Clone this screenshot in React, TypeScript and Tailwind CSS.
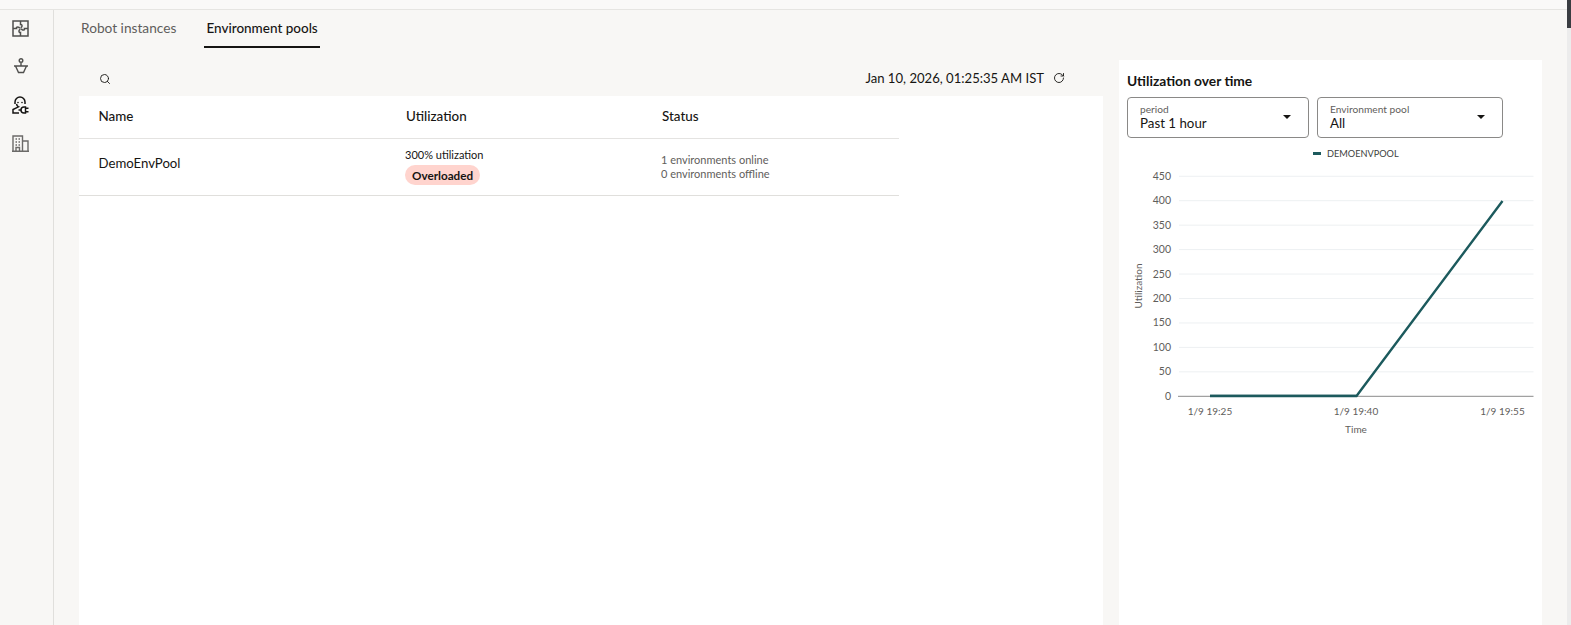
import { Search, RotateCw } from "lucide-react";

function PuzzleIcon() {
  return (
    <svg width="17" height="17" viewBox="0 0 17 17" fill="none" stroke="#4f4f4d" strokeWidth="1.5">
      <rect x="1" y="1" width="15" height="15" />
      <path d="M1 8.5h3.5c-.8-2 3.2-2 3 0M8.5 1v3.5c2-.8 2 3.2 0 3M16 8.5h-3.5c.8 2-3.2 2-3 0M8.5 16v-3.5c-2 .8-2-3.2 0-3" />
    </svg>
  );
}

function PersonBowlIcon() {
  return (
    <svg width="16" height="17" viewBox="0 0 16 17" fill="none" stroke="#4f4f4d" strokeWidth="1.4">
      <circle cx="8" cy="2.5" r="1.8" />
      <path d="M8 5v2.5M1 8h14M2.5 8 5.5 14.5h5L13.5 8" />
    </svg>
  );
}

function AgentPlugIcon() {
  return (
    <svg width="17" height="18" viewBox="0 0 17 18" fill="none" stroke="#161513" strokeWidth="1.5">
      <path d="M3 8V6a5 5 0 0 1 10 0v2" />
      <path d="M4.5 8c.3 1.5 1 2.3 2 2.8L1 13.5V17h6" />
      <circle cx="6" cy="6.5" r=".8" fill="#161513" stroke="none" />
      <circle cx="10" cy="6.5" r=".8" fill="#161513" stroke="none" />
      <path d="M9 14a3 3 0 0 1 3-3h1.5v6H12a3 3 0 0 1-3-3Z" fill="#fff" />
      <path d="M13.5 12.2h3M13.5 15.7h3M6.5 14H9" />
    </svg>
  );
}

function BuildingIcon() {
  return (
    <svg width="17" height="17" viewBox="0 0 17 17" fill="none" stroke="#6b6a68" strokeWidth="1.4">
      <path d="M1 16.3V1h9.5v15.3M10.5 6H16v10.3M0 16.3h17" />
      <path d="M3.5 4h1.5M6.5 4H8M3.5 7h1.5M6.5 7H8M3.5 10h1.5M6.5 10H8M4 16v-3.5h3.5V16" />
    </svg>
  );
}

function Sidebar() {
  return (
    <aside className="flex w-[54px] shrink-0 flex-col items-center gap-[21px] border-r border-[#e0dfdc] pr-[12px] pt-[10px]">
      <PuzzleIcon />
      <PersonBowlIcon />
      <AgentPlugIcon />
      <BuildingIcon />
    </aside>
  );
}

function Tabs() {
  return (
    <div className="flex h-[38px] pl-[27px] text-[13.7px]">
      <div className="mr-[28px] pt-[8px] text-[#5f5e5c]">Robot instances</div>
      <div className="h-[38px] border-b-2 border-[#161513] px-[2px] pt-[8px] text-[13.5px] font-medium text-[#161513]">Environment pools</div>
    </div>
  );
}

function PoolTable() {
  return (
    <div className="min-h-0 flex-1 bg-white">
      <div className="w-[820px] text-[#161513]">
        <div className="flex h-[43px] items-center border-b border-[#e4e3e1] pb-[2px] text-[13.4px] font-medium">
          <div className="w-[327px] pl-[19.5px]">Name</div>
          <div className="w-[256px]">Utilization</div>
          <div>Status</div>
        </div>
        <div className="flex h-[57px] items-center border-b border-[#e0dfdc]">
          <div className="w-[326px] pb-[6px] pl-[19.5px] text-[13.2px]">DemoEnvPool</div>
          <div className="w-[256px]">
            <div className="text-[11px] leading-[14px]">300% utilization</div>
            <div className="mt-[3px] inline-block rounded-full bg-[#ffd4ce] px-[7px] text-[11.7px] font-bold leading-[20px]">Overloaded</div>
          </div>
          <div className="text-[11px] leading-[14px] text-[#5f5e5c]">
            <div>1 environments online</div>
            <div>0 environments offline</div>
          </div>
        </div>
      </div>
    </div>
  );
}

function SelectBox({ label, value, width }: { label: string; value: string; width: string }) {
  return (
    <div className={`relative h-[41px] rounded-[4px] border border-[#8a8987] bg-white pl-[12px] pt-[5px] ${width}`}>
      <div className="text-[10.2px] leading-[13px] text-[#5f5e5c]">{label}</div>
      <div className="text-[13.3px] leading-[15px] text-[#161513]">{value}</div>
      <div className="absolute right-[17px] top-[17px] h-0 w-0 border-x-[4px] border-t-[4px] border-x-transparent border-t-[#161513]" />
    </div>
  );
}

function UtilizationChart() {
  const ticks = [450, 400, 350, 300, 250, 200, 150, 100, 50];
  const rowH = 24.45;
  const y0 = 258.3;
  return (
    <svg width="423" height="300" viewBox="0 0 423 300">
      {ticks.map((t) => {
        const y = y0 - (t / 50) * rowH;
        return (
          <g key={t}>
            <line x1="60" x2="414.5" y1={y} y2={y} stroke="#edf0f2" />
            <text x="52" y={y + 3.5} textAnchor="end" fontSize="10.5" fill="#5f5e5c">
              {t}
            </text>
          </g>
        );
      })}
      <text x="52" y={y0 + 3.5} textAnchor="end" fontSize="10.5" fill="#5f5e5c">
        0
      </text>
      <line x1="59" x2="414.5" y1={y0} y2={y0} stroke="#8a8a8a" />
      <polyline points="91,258 237.5,258 383.5,63" fill="none" stroke="#1c5a5d" strokeWidth="2.4" />
      <line x1="91" x2="237" y1={y0 - 0.5} y2={y0 - 0.5} stroke="#1c5a5d" strokeWidth="2" />
      <text x="91" y={y0 + 19} textAnchor="middle" fontSize="10" fill="#5f5e5c">
        1/9 19:25
      </text>
      <text x="237" y={y0 + 19} textAnchor="middle" fontSize="10" fill="#5f5e5c">
        1/9 19:40
      </text>
      <text x="383.5" y={y0 + 19} textAnchor="middle" fontSize="10" fill="#5f5e5c">
        1/9 19:55
      </text>
      <text x="237" y={y0 + 37} textAnchor="middle" fontSize="10" fill="#5f5e5c">
        Time
      </text>
      <text transform="translate(23 148) rotate(-90)" textAnchor="middle" fontSize="10" fill="#5f5e5c">
        Utilization
      </text>
      <rect x="194" y="14" width="8" height="3" fill="#1c5a5d" />
      <text x="208" y="18.5" fontSize="9.2" fill="#403f3e">
        DEMOENVPOOL
      </text>
    </svg>
  );
}

export default function App() {
  return (
    <div className="flex h-[625px] w-[1571px] overflow-hidden bg-[#f8f7f5] font-['Lato',sans-serif]">
      <div className="flex min-w-0 flex-1 flex-col">
        <div className="h-[10px] shrink-0 border-b border-[#e6e5e2] bg-[#faf9f8]" />
        <div className="flex min-h-0 flex-1">
          <Sidebar />
          <main className="flex min-w-0 flex-1 flex-col">
            <Tabs />
            <div className="flex min-h-0 flex-1 pl-[25px] pt-[12px]">
              <section className="flex w-[1024px] shrink-0 flex-col">
                <div className="flex h-[36px] items-center justify-between pl-[20px] pr-[38px] pt-[1px] text-[13.1px] text-[#161513]">
                  <Search size={12} strokeWidth={1.8} color="#161513" />
                  <div className="flex items-center gap-[9px]">
                    <span>Jan 10, 2026, 01:25:35 AM IST</span>
                    <RotateCw size={12} strokeWidth={1.8} color="#161513" />
                  </div>
                </div>
                <PoolTable />
              </section>
              <section className="ml-[16px] w-[423px] shrink-0 bg-white pl-[8px] pt-[12px]">
                <h2 className="text-[13.8px] font-bold leading-[18px] text-[#161513]">Utilization over time</h2>
                <div className="mt-[7px] flex gap-[8px]">
                  <SelectBox label="period" value="Past 1 hour" width="w-[182px]" />
                  <SelectBox label="Environment pool" value="All" width="w-[186px]" />
                </div>
                <div className="-ml-[8px]">
                  <UtilizationChart />
                </div>
              </section>
            </div>
          </main>
        </div>
      </div>
      <div className="w-[4px] shrink-0 bg-[#ececec]">
        <div className="h-[28px] bg-[#3a3d42]" />
      </div>
    </div>
  );
}
